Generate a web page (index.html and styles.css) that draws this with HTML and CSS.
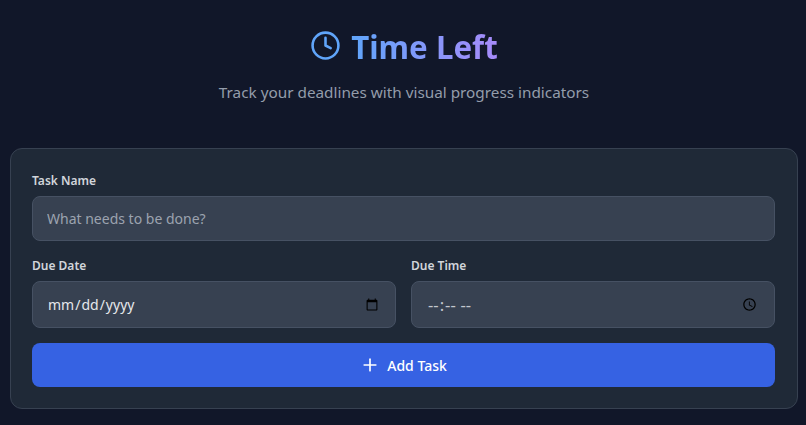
FILE: index.html
```html
<html>
<head>
  <link rel="stylesheet" href="styles.css">
</head>
<body>
  <div class="container">
    <div class="header">
      <h1 class="title">
        <svg class="title-icon" viewBox="0 0 24 24" fill="none" stroke="#60a5fa" stroke-width="2" stroke-linecap="round" stroke-linejoin="round">
          <circle cx="12" cy="12" r="10"></circle>
          <polyline points="12 6 12 12 16 14"></polyline>
        </svg>
        <span class="title-text">Time Left</span>
      </h1>
      <p class="subtitle">Track your deadlines with visual progress indicators</p>
    </div>
    <form class="card">
      <div class="form-group">
        <label class="form-label" for="task-name">Task Name</label>
        <input class="form-input task-input" id="task-name" type="text" placeholder="What needs to be done?" />
      </div>
      <div class="form-row">
        <div class="form-group">
          <label class="form-label" for="due-date">Due Date</label>
          <input class="form-input" id="due-date" type="date" />
        </div>
        <div class="form-group">
          <label class="form-label" for="due-time">Due Time</label>
          <input class="form-input time-input" id="due-time" type="time" />
        </div>
      </div>
      <button class="form-button" type="button">
        <svg class="button-icon" viewBox="0 0 24 24" fill="none" stroke="currentColor" stroke-width="2" stroke-linecap="round" stroke-linejoin="round">
          <line x1="12" y1="5" x2="12" y2="19"></line>
          <line x1="5" y1="12" x2="19" y2="12"></line>
        </svg>
        Add Task
      </button>
    </form>
  </div>
</body>
</html>
```

FILE: styles.css
```css
* {
  box-sizing: border-box;
  margin: 0;
  padding: 0;
}

body {
  background-color: #111729;
  font-family: "Noto Sans", Arial, sans-serif;
  overflow: hidden;
}

.container {
  padding: 26px 8px 0 10px;
}

.header {
  text-align: center;
  margin-bottom: 44px;
}

.title {
  display: flex;
  align-items: center;
  justify-content: center;
  gap: 10px;
  height: 42px;
  margin-bottom: 12px;
  font-size: 31.3px;
  font-weight: 700;
}

.title-icon {
  width: 31px;
  height: 31px;
  margin-top: -4px;
}

.title-text {
  background: linear-gradient(90deg, #60a5fa, #a78bfa);
  -webkit-background-clip: text;
  background-clip: text;
  color: transparent;
}

.subtitle {
  font-size: 15.3px;
  line-height: 24px;
  color: #949dab;
}

.card {
  display: flex;
  flex-direction: column;
  gap: 14px;
  padding: 21px 22px 21px 21px;
  background-color: #1f2937;
  border: 1px solid #374151;
  border-radius: 12px;
}

.form-row {
  display: grid;
  grid-template-columns: 1fr 1fr;
  gap: 15px;
}

.form-group {
  display: flex;
  flex-direction: column;
  gap: 5px;
}

.form-label {
  font-size: 12px;
  line-height: 21px;
  font-weight: 600;
  color: #d1d5db;
}

.form-input {
  height: 47px;
  padding: 0 14px;
  font-family: inherit;
  font-size: 14px;
  color: #e5e7eb;
  background-color: #374151;
  border: 1px solid #465163;
  border-radius: 8px;
  outline: none;
}

.task-input {
  height: 45px;
}

.time-input::-webkit-datetime-edit {
  padding-left: 1px;
  font-size: 16.5px;
  color: #c3c7ce;
}

.form-input::placeholder {
  color: #9ca3af;
}

.form-button {
  display: flex;
  align-items: center;
  justify-content: center;
  gap: 7px;
  height: 44px;
  margin-top: 1px;
  font-family: inherit;
  font-size: 14px;
  font-weight: 500;
  color: #fff;
  background-color: #3662e3;
  border: none;
  border-radius: 8px;
  cursor: pointer;
}

.button-icon {
  width: 20px;
  height: 20px;
}
```
